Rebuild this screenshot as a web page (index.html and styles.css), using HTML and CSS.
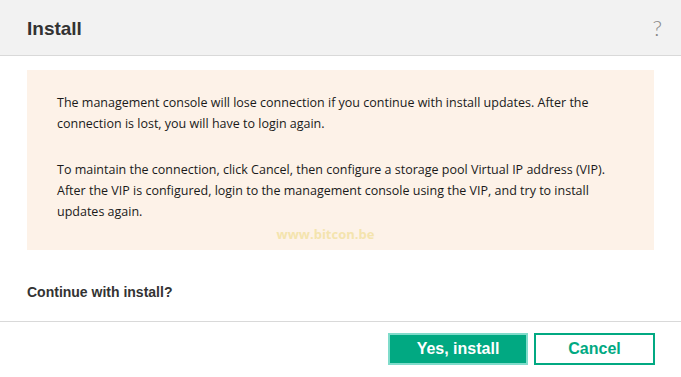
FILE: index.html
```html
<!DOCTYPE html>
<html lang="en">
<head>
  <meta charset="UTF-8">
  <title>Install</title>
  <link rel="stylesheet" href="styles.css">
</head>
<body>
  <div class="dialog">
    <div class="dialog-header">
      <h1>Install</h1>
      <span class="help">?</span>
    </div>

    <div class="dialog-body">
      <div class="warning">
        <p>The management console will lose connection if you continue with install updates. After the connection is lost, you will have to login again.</p>
        <p>To maintain the connection, click Cancel, then configure a storage pool Virtual IP address (VIP). After the VIP is configured, login to the management console using the VIP, and try to install updates again.</p>
        <div class="watermark">www.bitcon.be</div>
      </div>
      <div class="question">Continue with install?</div>
    </div>

    <div class="dialog-footer">
      <button class="btn btn-primary">Yes, install</button>
      <button class="btn btn-secondary">Cancel</button>
    </div>
  </div>
</body>
</html>
```

FILE: styles.css
```css
body {
  margin: 0;
  background-color: #fff;
  font-family: "Liberation Sans", Arial, sans-serif;
  color: #333;
}
.dialog {
  width: 681px;
  height: 377px;
  overflow: hidden;
}
.dialog-header {
  height: 55px;
  background-color: #f2f2f2;
  border-bottom: 1px solid #d9d9d9;
  display: flex;
  align-items: center;
  justify-content: space-between;
  padding: 0 19px 0 27px;
}
.dialog-header h1 {
  margin: 0;
  font-size: 19px;
  font-weight: bold;
  color: #333;
  padding-top: 3px;
}
.help {
  font-family: Lato, sans-serif;
  font-size: 22px;
  font-weight: 300;
  color: #888;
}
.dialog-body {
  padding: 14px 27px 0 27px;
  height: 266px;
  border-bottom: 1px solid #d9d9d9;
  box-sizing: border-box;
}
.warning {
  background-color: #fdf2e8;
  height: 180px;
  padding: 22px 30px 0 30px;
  box-sizing: border-box;
  font-family: "Open Sans", sans-serif;
  font-size: 12.5px;
  line-height: 21px;
  color: #1a1a1a;
}
.warning p {
  margin: 0 0 25px 0;
}
.watermark {
  margin-top: -23px;
  text-align: center;
  padding-right: 30px;
  font-family: "Open Sans", sans-serif;
  font-weight: bold;
  font-size: 13px;
  color: #f4e4ae;
}
.question {
  margin-top: 34px;
  font-size: 14px;
  font-weight: bold;
  color: #333;
}
.dialog-footer {
  display: flex;
  justify-content: flex-end;
  gap: 6px;
  padding: 11px 26px 0 0;
}
.btn {
  height: 32px;
  font-family: "Liberation Sans", Arial, sans-serif;
  font-weight: bold;
  font-size: 16px;
  cursor: pointer;
  box-sizing: border-box;
}
.btn-primary {
  width: 140px;
  background-color: #01a982;
  color: #fff;
  border: 2px solid #80dccb;
}
.btn-secondary {
  width: 121px;
  background-color: #fff;
  color: #01a982;
  border: 2px solid #01a982;
}
```
